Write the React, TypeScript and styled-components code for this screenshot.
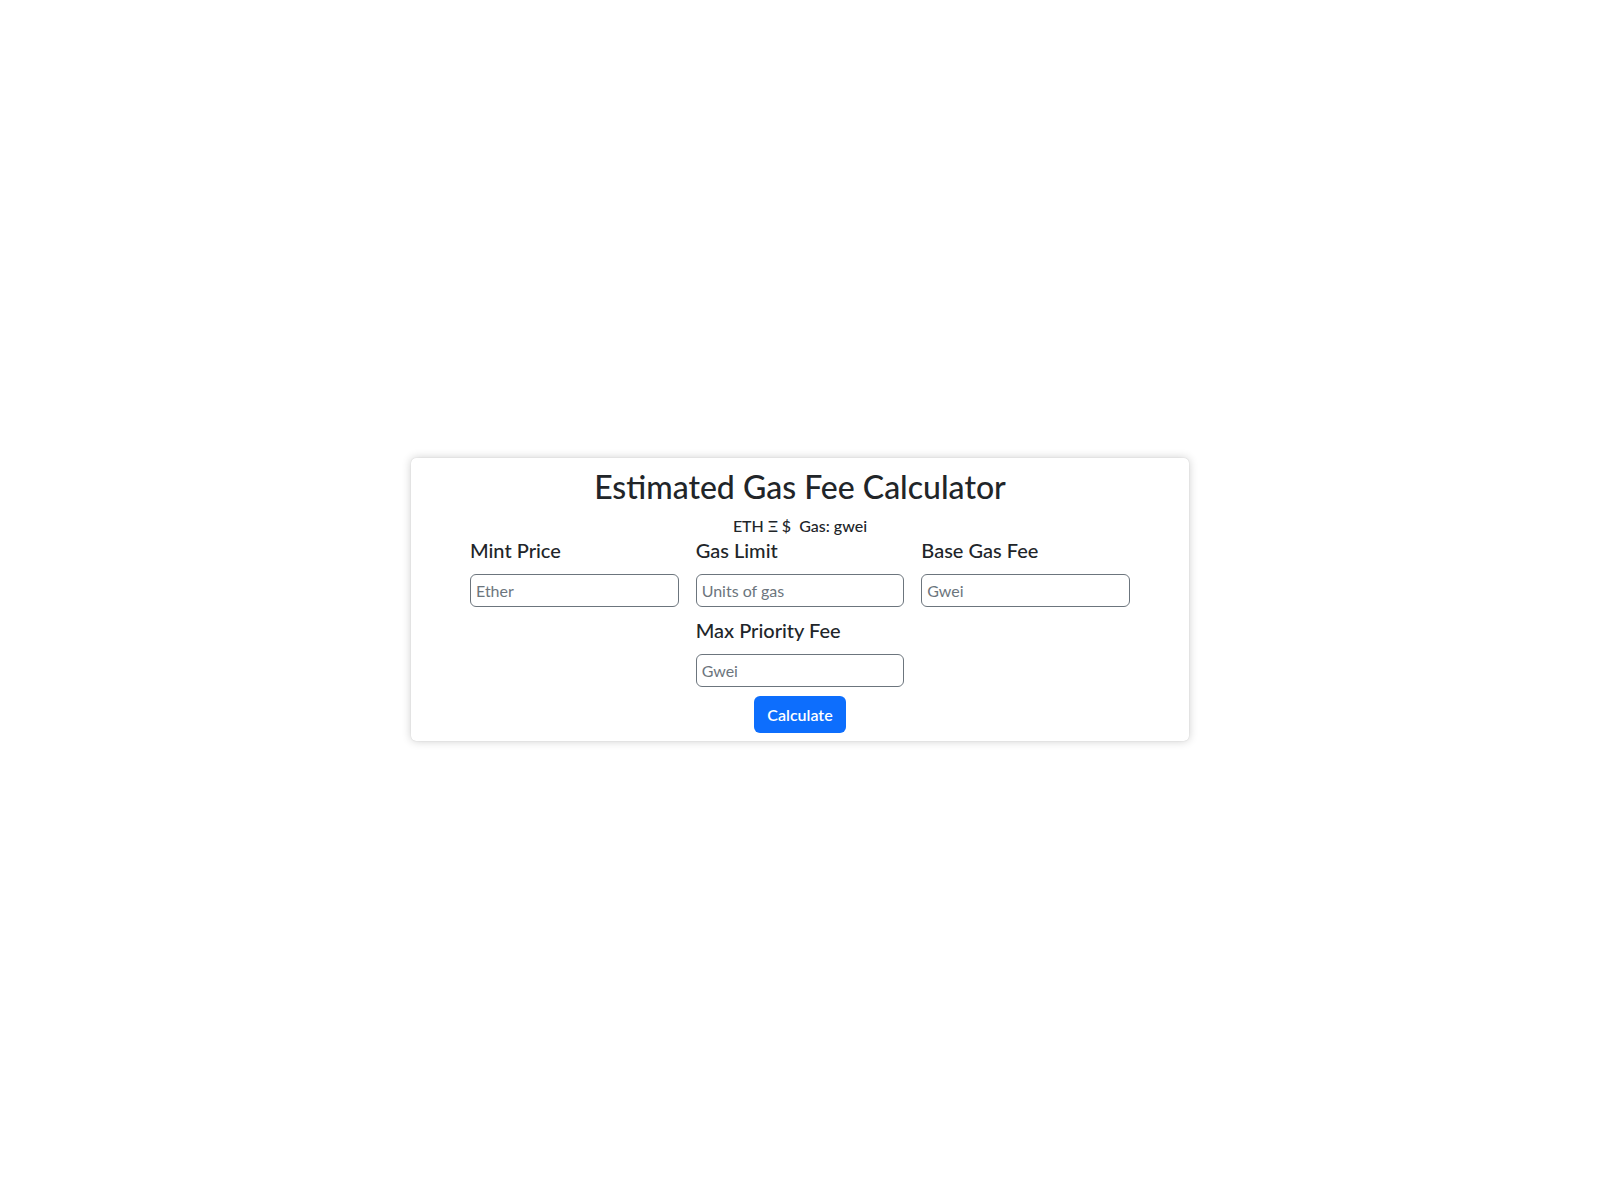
import React from "react";
import styled, { createGlobalStyle } from "styled-components";

const GlobalStyle = createGlobalStyle`
  html, body {
    margin: 0;
    padding: 0;
    background: #ffffff;
  }
  body {
    font-family: "Lato", "Open Sans", sans-serif;
    color: #212529;
  }
  * { box-sizing: border-box; }
`;

const Page = styled.main`
  width: 100%;
  min-height: 1200px;
  display: flex;
  align-items: center;
  justify-content: center;
  padding-bottom: 1px;
`;

const Card = styled.section`
  width: 778px;
  background: #ffffff;
  border-radius: 5px;
  box-shadow: 0 0 1px rgba(0, 0, 0, 0.2), 0 0 10px rgba(0, 0, 0, 0.2);
  padding: 10px 59px 8px;
  display: flex;
  flex-direction: column;
  align-items: center;
`;

const Title = styled.h2`
  margin: 0;
  font-size: 32px;
  font-weight: 500;
  line-height: 1.2;
  color: #212529;
  text-align: center;
`;

const Subtitle = styled.p`
  margin: 8px 0 0;
  font-size: 16px;
  font-weight: 500;
  line-height: 24px;
  color: #212529;
  white-space: pre;
`;

const FieldGrid = styled.div`
  width: 100%;
  display: grid;
  grid-template-columns: repeat(3, 1fr);
  column-gap: 17px;
  row-gap: 11px;
`;

const Field = styled.div<{ $col?: number }>`
  display: flex;
  flex-direction: column;
  gap: 12px;
  grid-column: ${(p) => p.$col ?? "auto"};
`;

const Label = styled.label`
  font-size: 20px;
  font-weight: 500;
  line-height: 24px;
  color: #212529;
`;

const Input = styled.input`
  width: 100%;
  height: 33px;
  border: 1px solid #6c757d;
  border-radius: 6px;
  padding: 0 5px;
  font-family: "Lato", "Open Sans", sans-serif;
  font-size: 16px;
  color: #212529;
  background: #ffffff;
  outline: none;
  &::placeholder {
    color: #6c757d;
  }
`;

const Button = styled.button`
  margin-top: 9px;
  height: 37px;
  padding: 0 13px;
  border: none;
  border-radius: 6px;
  background: #0d6efd;
  color: #ffffff;
  font-family: "Lato", "Open Sans", sans-serif;
  font-size: 16px;
  font-weight: 600;
  cursor: pointer;
`;

const fields = [
  { id: "mint", label: "Mint Price", placeholder: "Ether" },
  { id: "limit", label: "Gas Limit", placeholder: "Units of gas" },
  { id: "base", label: "Base Gas Fee", placeholder: "Gwei" },
  { id: "priority", label: "Max Priority Fee", placeholder: "Gwei", col: 2 },
];

export default function App() {
  return (
    <>
      <GlobalStyle />
      <Page>
        <Card>
          <Title>Estimated Gas Fee Calculator</Title>
          <Subtitle>{"ETH Ξ $  Gas: gwei"}</Subtitle>
          <FieldGrid>
            {fields.map((f) => (
              <Field key={f.id} $col={f.col}>
                <Label htmlFor={f.id}>{f.label}</Label>
                <Input id={f.id} type="text" placeholder={f.placeholder} />
              </Field>
            ))}
          </FieldGrid>
          <Button type="button">Calculate</Button>
        </Card>
      </Page>
    </>
  );
}
